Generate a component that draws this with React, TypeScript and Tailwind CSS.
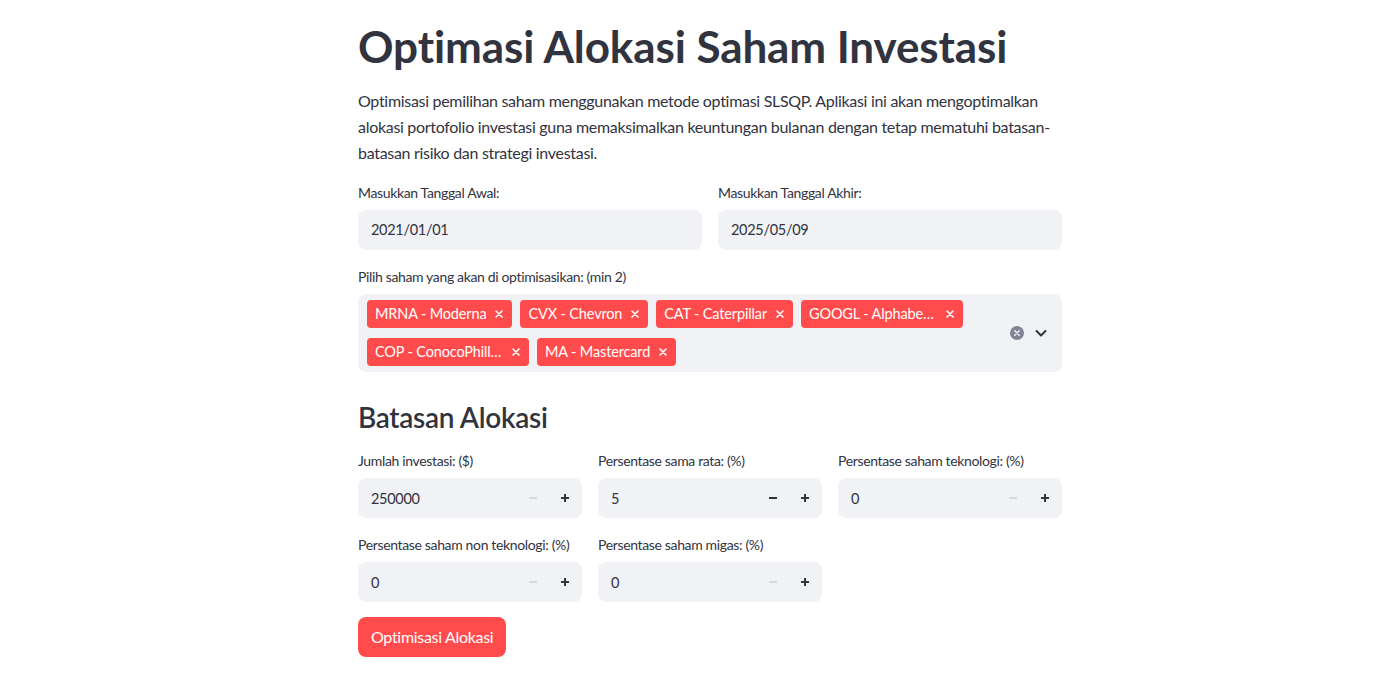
import React from "react";

const font = { fontFamily: "'Source Sans Pro', Lato, 'Noto Sans', sans-serif" };

function Chip({ text }: { text: string }) {
  return (
    <div className="flex h-[28px] items-center rounded-[4px] bg-[#ff4b4b] pl-[8px] pr-[8px] text-white">
      <span className="max-w-[128px] truncate text-[14.5px] leading-[28px] tracking-[-0.15px]">{text}</span>
      <svg className="ml-[8px]" width="10" height="10" viewBox="0 0 10 10">
        <path d="M2 2 L8 8 M8 2 L2 8" stroke="white" strokeWidth="1.6" strokeLinecap="round" />
      </svg>
    </div>
  );
}

function NumberInput({ label, value, minusEnabled }: { label: string; value: string; minusEnabled?: boolean }) {
  return (
    <div className="flex flex-col">
      <label className="mb-[7px] text-[14px] leading-[20px] tracking-[-0.35px] text-[#31333f]">{label}</label>
      <div className="flex h-[40px] items-center rounded-[8px] bg-[#f0f2f6]">
        <div className="flex-1 pl-[13px] text-[14.5px] tracking-[-0.3px] text-[#31333f]">{value}</div>
        <div className="flex w-[32px] items-center justify-center">
          <svg width="10" height="10" viewBox="0 0 10 10">
            <path d="M1 5 H9" stroke={minusEnabled ? "#31333f" : "#d5d7dd"} strokeWidth="2" />
          </svg>
        </div>
        <div className="mr-[1px] flex w-[32px] items-center justify-center">
          <svg width="10" height="10" viewBox="0 0 10 10">
            <path d="M1 5 H9 M5 1 V9" stroke="#31333f" strokeWidth="2" />
          </svg>
        </div>
      </div>
    </div>
  );
}

export default function App() {
  return (
    <div className="flex min-h-screen justify-center bg-white pl-[28px] text-[#31333f]" style={font}>
      <div className="w-[704px] pt-[20px] pb-[20px]">
        <h1 className="text-[44px] font-bold leading-[1.2] tracking-[-0.1px] text-[#31333f]">
          Optimasi Alokasi Saham Investasi
        </h1>
        <p className="mt-[15px] whitespace-nowrap text-[16px] leading-[26px] tracking-[-0.3px] text-[#31333f]">
          Optimisasi pemilihan saham menggunakan metode optimasi SLSQP. Aplikasi ini akan mengoptimalkan
          <br />
          alokasi portofolio investasi guna memaksimalkan keuntungan bulanan dengan tetap mematuhi batasan-
          <br />
          batasan risiko dan strategi investasi.
        </p>

        <div className="mt-[17px] grid grid-cols-2 gap-[16px]">
          <div className="flex flex-col">
            <label className="mb-[7px] text-[14px] leading-[20px] tracking-[-0.35px]">Masukkan Tanggal Awal:</label>
            <div className="flex h-[40px] items-center rounded-[8px] bg-[#f0f2f6] pl-[13px] text-[14.5px] tracking-[-0.3px]">2021/01/01</div>
          </div>
          <div className="flex flex-col">
            <label className="mb-[7px] text-[14px] leading-[20px] tracking-[-0.35px]">Masukkan Tanggal Akhir:</label>
            <div className="flex h-[40px] items-center rounded-[8px] bg-[#f0f2f6] pl-[13px] text-[14.5px] tracking-[-0.3px]">2025/05/09</div>
          </div>
        </div>

        <div className="mt-[17px] flex flex-col">
          <label className="mb-[7px] text-[14px] leading-[20px] tracking-[-0.35px]">Pilih saham yang akan di optimisasikan: (min 2)</label>
          <div className="flex min-h-[78px] items-center rounded-[8px] bg-[#f0f2f6]">
            <div className="flex flex-1 flex-wrap gap-x-[8px] gap-y-[10px] py-[6px] pl-[9px]">
              <Chip text="MRNA - Moderna" />
              <Chip text="CVX - Chevron" />
              <Chip text="CAT - Caterpillar" />
              <Chip text="GOOGL - Alphabet Inc." />
              <Chip text="COP - ConocoPhillips" />
              <Chip text="MA - Mastercard" />
            </div>
            <div className="flex items-center gap-[10px] pr-[14px]">
              <svg width="14" height="14" viewBox="0 0 14 14">
                <circle cx="7" cy="7" r="7" fill="#808495" />
                <path d="M4.8 4.8 L9.2 9.2 M9.2 4.8 L4.8 9.2" stroke="#f0f2f6" strokeWidth="1.5" strokeLinecap="round" />
              </svg>
              <svg width="14" height="14" viewBox="0 0 14 14">
                <path d="M2.5 5 L7 9.5 L11.5 5" stroke="#31333f" strokeWidth="2" fill="none" strokeLinecap="round" strokeLinejoin="round" />
              </svg>
            </div>
          </div>
        </div>

        <h3 className="mt-[29px] text-[28px] font-semibold leading-[1.2] tracking-[-0.3px]">Batasan Alokasi</h3>

        <div className="mt-[17px] grid grid-cols-3 gap-x-[16px] gap-y-[17px]">
          <NumberInput label="Jumlah investasi: ($)" value="250000" />
          <NumberInput label="Persentase sama rata: (%)" value="5" minusEnabled />
          <NumberInput label="Persentase saham teknologi: (%)" value="0" />
          <NumberInput label="Persentase saham non teknologi: (%)" value="0" />
          <NumberInput label="Persentase saham migas: (%)" value="0" />
        </div>

        <button className="mt-[15px] h-[40px] rounded-[8px] bg-[#ff4b4b] px-[13px] text-[16px] tracking-[-0.3px] text-white">
          Optimisasi Alokasi
        </button>
      </div>
    </div>
  );
}
